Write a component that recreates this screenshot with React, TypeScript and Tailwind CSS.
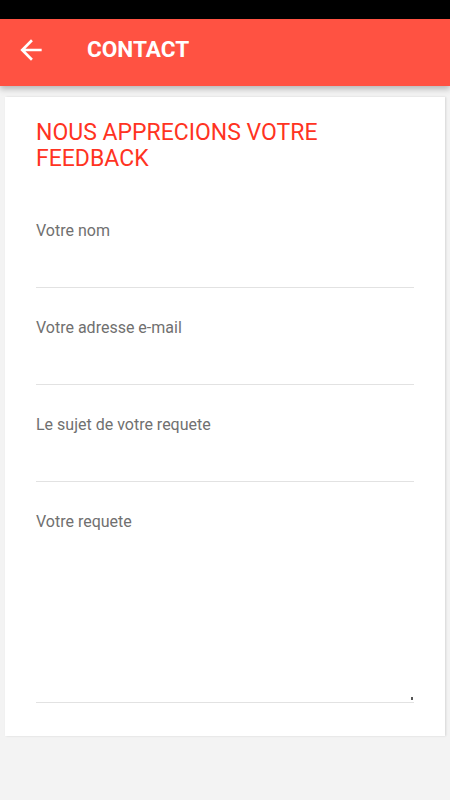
const fields = ['Votre nom', 'Votre adresse e-mail', 'Le sujet de votre requete'];

export default function App() {
  return (
    <div className="flex min-h-[800px] w-[450px] flex-col bg-[#f3f3f3] font-['Roboto',sans-serif]">
      {/* Status bar */}
      <div className="h-[19px] bg-black" />

      {/* Toolbar */}
      <header className="relative z-10 flex h-[67px] items-center bg-[#ff5242] pb-[5px] shadow-[0_3px_6px_rgba(0,0,0,0.25)]">
        <svg viewBox="0 0 24 24" className="ml-[15px] h-8 w-8 fill-white">
          <path d="M20 11H7.83l5.59-5.59L12 4l-8 8 8 8 1.41-1.41L7.83 13H20v-2z" />
        </svg>
        <h1 className="ml-[40px] text-[22.6px] font-bold text-white">CONTACT</h1>
      </header>

      {/* Card */}
      <main className="mx-[5px] mt-[11px] bg-white px-[31px] pt-[23px] pb-[33px] shadow-[1px_0_2px_rgba(0,0,0,0.12)]">
        <h2 className="text-[23px] leading-[26px] text-[#ff3322]">
          NOUS APPRECIONS VOTRE FEEDBACK
        </h2>

        <div className="mt-[47px] flex flex-col gap-[28px]">
          {fields.map((label) => (
            <div key={label} className="h-[69px] border-b border-[#e2e2e2]">
              <span className="text-[16px] leading-[19px] text-[#707070]">{label}</span>
            </div>
          ))}

          {/* Message */}
          <div className="relative h-[193px] border-b border-[#e2e2e2]">
            <span className="text-[16px] leading-[19px] text-[#707070]">Votre requete</span>
            <span className="absolute right-[1px] bottom-[2px] h-[3px] w-[2px] bg-[#555]" />
          </div>
        </div>
      </main>
    </div>
  );
}
